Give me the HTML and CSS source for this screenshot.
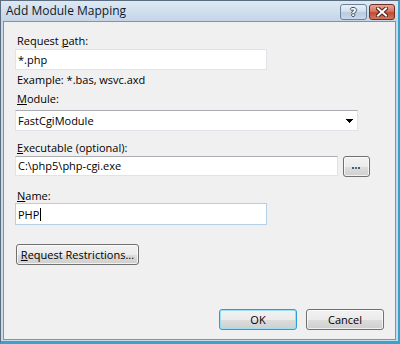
FILE: index.html
```html
<!DOCTYPE html>
<html lang="en">
<head>
    <meta charset="UTF-8">
    <meta name="viewport" content="width=device-width, initial-scale=1.0">
    <title>Add Module Mapping</title>
    <link rel="stylesheet" href="styles.css">
</head>
<body>
    <div class="window">
        <div class="title-bar">
            <span class="title">Add Module Mapping</span>
            <div class="caption-buttons">
                <div class="caption-btn help-btn">?</div>
                <div class="caption-btn close-btn">
                    <svg width="12" height="10" viewBox="0 0 12 10">
                        <path d="M2 1.5 L10 8.5 M10 1.5 L2 8.5" stroke="#4a2019" stroke-width="4" stroke-linecap="square"/>
                        <path d="M2 1.5 L10 8.5 M10 1.5 L2 8.5" stroke="#ffffff" stroke-width="2" stroke-linecap="square"/>
                    </svg>
                </div>
            </div>
        </div>

        <div class="client">
            <div class="label label-first">Request <u>p</u>ath:</div>
            <div class="textbox short">*.php</div>
            <div class="hint">Example: *.bas, wsvc.axd</div>

            <div class="label label-module"><u>M</u>odule:</div>
            <div class="combo">
                <span>FastCgiModule</span>
                <svg class="combo-arrow" width="7" height="4" viewBox="0 0 7 4">
                    <rect x="0" y="0" width="7" height="1" fill="#000"/>
                    <rect x="1" y="1" width="5" height="1" fill="#000"/>
                    <rect x="2" y="2" width="3" height="1" fill="#000"/>
                    <rect x="3" y="3" width="1" height="1" fill="#000"/>
                </svg>
            </div>

            <div class="label label-exec"><u>E</u>xecutable (optional):</div>
            <div class="exec-row">
                <div class="textbox exec">C:\php5\php-cgi.exe</div>
                <div class="button browse-btn">
                    <svg width="9" height="2" viewBox="0 0 9 2">
                        <rect x="0" y="0" width="2" height="2" fill="#3a5f8f"/>
                        <rect x="3" y="0" width="2" height="2" fill="#6f6a4a"/>
                        <rect x="6" y="0" width="2" height="2" fill="#3a5f8f"/>
                    </svg>
                </div>
            </div>

            <div class="label label-name"><u>N</u>ame:</div>
            <div class="textbox short focused">PHP<span class="caret"></span></div>

            <div class="button restrictions-btn"><u>R</u>equest Restrictions...</div>

            <div class="dialog-buttons">
                <div class="button dialog-btn default-btn">OK</div>
                <div class="button dialog-btn">Cancel</div>
            </div>
        </div>
    </div>
</body>
</html>
```

FILE: styles.css
```css
body {
    margin: 0;
    padding: 0;
    font-family: "Open Sans", "Noto Sans", sans-serif;
    font-size: 11px;
    color: #000;
    background-color: #ffffff;
}
.window {
    box-sizing: border-box;
    width: 400px;
    height: 344px;
    display: flex;
    flex-direction: column;
    border-left: 1px solid #5c6d80;
    border-top: 1px solid #5c6d80;
    border-right: 2px solid #35a4cc;
    border-bottom: 3px solid #35a4cc;
    padding: 0 2px 1px 2px;
    background: linear-gradient(to bottom, #dde8f4 0, #c3d4e7 21px, #c9d9ea 22px, #c9d9ea 100%);
}
.title-bar {
    height: 20px;
    display: flex;
    justify-content: space-between;
    align-items: flex-start;
    padding: 0 1px 0 3px;
}
.title {
    font-size: 12px;
    line-height: 20px;
    color: #0e1a2a;
}
.caption-buttons {
    display: flex;
    gap: 2px;
    margin-top: 3px;
}
.caption-btn {
    box-sizing: border-box;
    width: 27px;
    height: 16px;
    border-radius: 3px;
    display: flex;
    align-items: center;
    justify-content: center;
}
.help-btn {
    border: 1px solid #6f8297;
    background: linear-gradient(to bottom, #e8f0f9 0, #d2e0ee 45%, #b8cbe0 55%, #c9d8e9 100%);
    color: #ffffff;
    font-family: "DejaVu Sans", sans-serif;
    font-weight: bold;
    font-size: 11px;
    text-shadow: 1px 0 0 #3d4d60, -1px 0 0 #3d4d60, 0 1px 0 #3d4d60, 0 -1px 0 #3d4d60;
}
.close-btn {
    width: 26px;
    border: 1px solid #6e2e24;
    background: linear-gradient(to bottom, #e8a595 0, #d67562 45%, #c14a32 55%, #d0775c 100%);
}
.client {
    flex: 1;
    display: flex;
    flex-direction: column;
    align-items: flex-start;
    border: 1px solid #8193a8;
    background-color: #f0f0f0;
    padding: 11px 11px 9px 11px;
}
.label {
    line-height: 15px;
    padding-left: 2px;
}
.label-module {
    margin-top: 4px;
}
.label-exec {
    margin-top: 9px;
}
.label-name {
    margin-top: 11px;
}
.textbox {
    box-sizing: border-box;
    height: 21px;
    line-height: 19px;
    padding-left: 2px;
    background-color: #ffffff;
    border: 1px solid #e2e3ea;
    border-top-color: #abadb3;
    white-space: nowrap;
}
.label-first + .textbox {
    margin-top: 1px;
    border-top-color: #e2e3ea;
}
.short {
    width: 252px;
}
.focused {
    height: 22px;
    border-color: #b5cfe7;
    display: flex;
    align-items: center;
}
.caret {
    display: inline-block;
    width: 1px;
    height: 13px;
    background-color: #000;
    margin-left: 1px;
}
.hint {
    margin-top: 2px;
    line-height: 15px;
    padding-left: 2px;
}
.combo {
    box-sizing: border-box;
    width: 343px;
    height: 21px;
    margin-top: 4px;
    display: flex;
    align-items: center;
    justify-content: space-between;
    padding: 0 4px 0 2px;
    background-color: #ffffff;
    border: 1px solid #e2e3ea;
    border-top-color: #abadb3;
}
.exec-row {
    display: flex;
    gap: 5px;
    margin-top: 1px;
}
.exec {
    width: 323px;
    height: 20px;
    line-height: 18px;
}
.button {
    box-sizing: border-box;
    display: flex;
    align-items: center;
    justify-content: center;
    border: 1px solid #707070;
    border-radius: 3px;
    background: linear-gradient(to bottom, #f2f2f2 0, #ebebeb 50%, #dddddd 51%, #cfcfcf 100%);
    box-shadow: inset 0 0 0 1px rgba(255, 255, 255, 0.7);
    height: 21px;
}
.browse-btn {
    width: 27px;
    padding-top: 2px;
}
.restrictions-btn {
    width: 123px;
    margin-top: 19px;
    margin-left: 1px;
}
.dialog-buttons {
    margin-top: auto;
    align-self: flex-end;
    display: flex;
    gap: 9px;
}
.dialog-btn {
    width: 78px;
}
.default-btn {
    border-color: #2a9fd6;
    box-shadow: inset 0 0 0 1px #9fdcf5;
}
u {
    text-decoration-thickness: 1px;
    text-underline-offset: 1px;
}
```
